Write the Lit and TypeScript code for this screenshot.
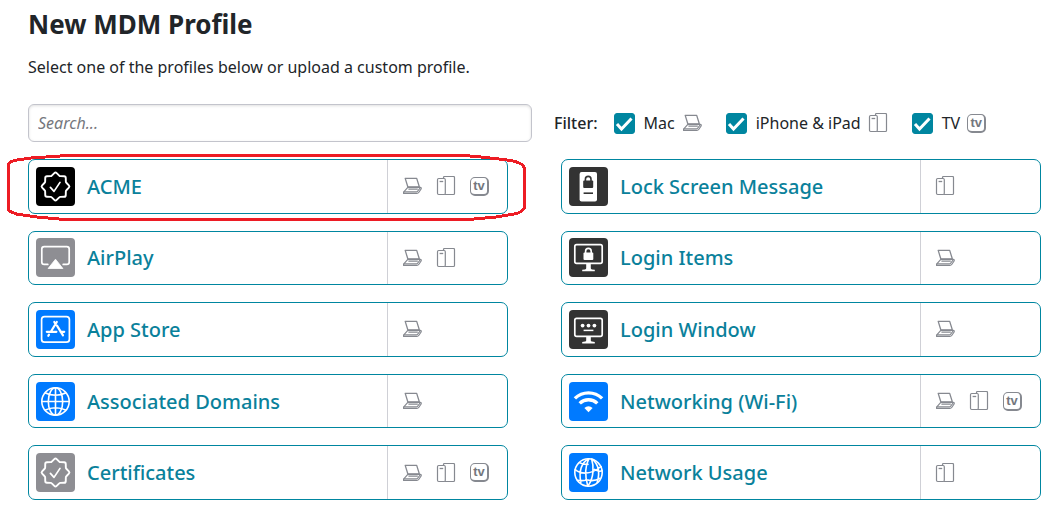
import { LitElement, html, svg, css, nothing } from "lit";
import { customElement, property } from "lit/decorators.js";

type Device = "mac" | "mobile" | "tv";
type Glyph = "seal" | "airplay" | "appstore" | "globe" | "phonelock" | "screenlock" | "screenlogin" | "wifi" | "network";

interface Profile {
  name: string;
  glyph: Glyph;
  color: string;
  devices: Device[];
  marked?: boolean;
}

const BLUE = "#007aff";
const GRAY = "#8e8e93";
const DARK = "#333333";

const PROFILES: Profile[] = [
  { name: "ACME", glyph: "seal", color: "#000000", devices: ["mac", "mobile", "tv"], marked: true },
  { name: "AirPlay", glyph: "airplay", color: GRAY, devices: ["mac", "mobile"] },
  { name: "App Store", glyph: "appstore", color: BLUE, devices: ["mac"] },
  { name: "Associated Domains", glyph: "globe", color: BLUE, devices: ["mac"] },
  { name: "Certificates", glyph: "seal", color: GRAY, devices: ["mac", "mobile", "tv"] },
  { name: "Lock Screen Message", glyph: "phonelock", color: DARK, devices: ["mobile"] },
  { name: "Login Items", glyph: "screenlock", color: DARK, devices: ["mac"] },
  { name: "Login Window", glyph: "screenlogin", color: DARK, devices: ["mac"] },
  { name: "Networking (Wi-Fi)", glyph: "wifi", color: BLUE, devices: ["mac", "mobile", "tv"] },
  { name: "Network Usage", glyph: "network", color: BLUE, devices: ["mobile"] },
];

/* Eight-pointed badge outline centred in the 39-unit tile. */
const sealPath = (() => {
  const parts: string[] = [];
  const at = (r: number, deg: number) => {
    const a = (deg * Math.PI) / 180;
    return `${(19.5 + r * Math.sin(a)).toFixed(2)} ${(19.5 - r * Math.cos(a)).toFixed(2)}`;
  };
  for (let i = 0; i < 8; i++) {
    const d = i * 45;
    parts.push(`${i ? "L" : "M"}${at(13.4, d - 5)}Q${at(14.5, d)} ${at(13.4, d + 5)}L${at(11.5, d + 19)}Q${at(11.1, d + 22.5)} ${at(11.5, d + 26)}`);
  }
  return parts.join("") + "Z";
})();

const GLYPHS = {
  seal: svg`
    <path d=${sealPath} fill="none" stroke="#fff" stroke-width="1.9" stroke-linejoin="round"/>
    <path d="M14.4 20.4l3.6 4 6-9" fill="none" stroke="#fff" stroke-width="1.7" stroke-linecap="round" stroke-linejoin="round"/>`,
  airplay: svg`
    <path d="M11.8 26.4H8.2q-2.400 0-2.400-2.400V11q0-2.400 2.400-2.400h22.600q2.400 0 2.400 2.400v13q0 2.400-2.400 2.400h-3.600" fill="none" stroke="#fff" stroke-width="1.700" stroke-linecap="round"/>
    <path d="M19.500 21.200l7.400 9.300H12.100z" fill="#fff" stroke="#fff" stroke-width=".8" stroke-linejoin="round"/>`,
  appstore: svg`
    <rect x="5.6" y="6.600" width="27.800" height="25.600" rx="3" fill="none" stroke="#fff" stroke-width="1.700"/>
    <path d="M20.800 12L14.800 21.800M18.300 12l1.300 2.200M21 15.600l6 9.800M10.800 21.800h9.600M24.500 21.800h3.700M13 24.600l-.7 1.200" fill="none" stroke="#fff" stroke-width="2.200" stroke-linecap="round"/>`,
  globe: svg`
    <g fill="none" stroke="#fff" stroke-width="1.600">
      <circle cx="19.500" cy="19.500" r="13.700"/>
      <ellipse cx="19.500" cy="19.500" rx="7.200" ry="13.700"/>
      <path d="M19.500 5.800v27.400M5.800 19.500h27.400M8.700 10.800q10.800 5 21.600 0M8.700 28.200q10.800-5 21.600 0"/>
    </g>`,
  phonelock: svg`
    <rect x="10.600" y="5" width="17.400" height="29.400" rx="2" fill="#fff"/>
    <rect x="14.200" y="13.400" width="10" height="7.600" rx="1" fill="#333"/>
    <path d="M16.400 14v-1.800a2.800 2.800 0 0 1 5.600 0V14" fill="none" stroke="#333" stroke-width="1.600"/>
    <path d="M14.600 26.200h9.400" stroke="#333" stroke-width="1.600"/>`,
  screenlock: svg`
    <rect x="5.800" y="6.600" width="27.400" height="18.800" rx="1.800" fill="none" stroke="#fff" stroke-width="1.700"/>
    <path d="M17.200 26h4.600v4.200q0 1 1.200 1.200l2.800.3v1.500H13.200v-1.500l2.800-.3q1.200-.2 1.200-1.200z" fill="#fff"/>
    <rect x="14.500" y="14.500" width="9.800" height="7.500" rx="1" fill="#fff"/>
    <path d="M16.600 15v-1.800a2.800 2.800 0 0 1 5.600 0V15" fill="none" stroke="#fff" stroke-width="1.600"/>`,
  screenlogin: svg`
    <rect x="5.800" y="8.400" width="27.400" height="18" rx="1.800" fill="none" stroke="#fff" stroke-width="1.700"/>
    <path d="M17.200 26.800h4.600v3.600q0 1 1.200 1.200l2.800.3v1.500H13.200v-1.500l2.800-.3q1.200-.2 1.200-1.200z" fill="#fff"/>
    <circle cx="13.600" cy="15.600" r="1.900" fill="#fff"/><circle cx="19.500" cy="15.600" r="1.900" fill="#fff"/><circle cx="25.400" cy="15.600" r="1.900" fill="#fff"/>
    <path d="M14.600 20.400h9.800" stroke="#fff" stroke-width="1.500"/>`,
  wifi: svg`
    <g fill="none" stroke="#fff" stroke-width="3.400">
      <path d="M5.900 16.400a19.500 19.500 0 0 1 27.200 0"/>
      <path d="M10.700 21.400a12.600 12.600 0 0 1 17.600 0"/>
    </g>
    <path d="M15.400 26a5.900 5.900 0 0 1 8.200 0l-4.100 4.200z" fill="#fff"/>`,
  network: svg`
    <g fill="none" stroke="#fff" stroke-width="1.600" stroke-linecap="round">
      <circle cx="19.500" cy="19.500" r="13.700"/>
      <path d="M19.800 5.800C12 10 9.500 17 11.800 29.500M19.800 5.800C16 13 15.800 22 18.600 32.500M22.600 6C25 13 25 25 18.900 33M23.600 6.400C30 12 31 20 28.200 29.500M6.200 16.600q4 3.500 10.200 3.500 7.500 0 15.700-6.600M8.500 27.200q4.500 1 9.200-.2M16.800 26.600q8 2.600 13.900-1.200M10.500 9.600q3 2 8.500 1.800M25.500 16.400q4.500 2.600 7.600 1.400"/>
    </g>`,
};

const deviceIcon = (device: Device) => {
  if (device === "mac") {
    return html`<svg class="device" viewBox="0 0 20 20" role="img" aria-label="Mac">
      <path d="M3.200 2.400h11.500l2.600 8.400H5.800z" fill="#fff" stroke="#868990" stroke-width="1.300" stroke-linejoin="round"/>
      <path d="M5.800 11.400h12.400q1.400.2.900 1.600l-2.400 3.500q-.6.900-1.800.9H1.600v-1.200z" fill="#fff" stroke="#868990" stroke-width="1.200" stroke-linejoin="round"/>
      <path d="M1.600 15.900h12.600q1 0 1.600-.9l2.400-3.200M6.400 13.200h9.400" fill="none" stroke="#868990" stroke-width="1.200"/>
    </svg>`;
  }
  if (device === "mobile") {
    return html`<svg class="device" viewBox="0 0 20 20" role="img" aria-label="iPhone and iPad">
      <rect x="7.500" y=".5" width="11" height="18" rx="1" fill="#fff" stroke="#868990" stroke-width="1.200"/>
      <rect x="1.500" y="2.500" width="7.800" height="16" rx="1.200" fill="#fff" stroke="#868990" stroke-width="1.200"/>
      <path d="M3.600 5.500h3.600" stroke="#868990" stroke-width="1.300"/>
    </svg>`;
  }
  return html`<span class="device tv" role="img" aria-label="TV">tv</span>`;
};

const deviceStyles = css`
  .device {
    display: block;
    flex: none;
    box-sizing: border-box;
    width: 20px;
    height: 20px;
  }
  .tv {
    width: 19px;
    height: 19px;
    border: 1px solid #868990;
    border-width: 1px 2px 2px 1px;
    border-radius: 5px;
    color: #74777e;
    font: 700 13px/15px "Liberation Sans", sans-serif;
    text-align: center;
  }
`;

@customElement("profile-card")
export class ProfileCard extends LitElement {
  @property({ attribute: false }) profile!: Profile;

  static styles = [
    deviceStyles,
    css`
      :host {
        display: block;
      }
      .card {
        position: relative;
        display: flex;
        box-sizing: border-box;
        height: 100%;
        min-height: 54px;
        border: 1px solid #0086a0;
        border-radius: 7px;
        background: #fff;
        color: #0a819b;
        text-decoration: none;
      }
      .main {
        display: flex;
        flex: 1;
        align-items: center;
        gap: 12px;
        min-width: 0;
        padding-left: 7px;
      }
      .tile {
        flex: none;
        width: 39px;
        height: 39px;
      }
      .name {
        padding-top: 1px;
        font-size: 20px;
        font-weight: 500;
        line-height: 28px;
        white-space: nowrap;
      }
      .devices {
        display: flex;
        flex: none;
        align-items: center;
        gap: 14px;
        box-sizing: border-box;
        width: 120px;
        padding-left: 14px;
        border-left: 1px solid #cfd0d6;
      }
      .mark {
        position: absolute;
        top: -6px;
        left: -22px;
        width: calc(100% + 41px);
        height: calc(100% + 14px);
        pointer-events: none;
      }
    `,
  ];

  render() {
    const p = this.profile;
    return html`<a class="card" href="#">
      <span class="main">
        <svg class="tile" viewBox="0 0 39 39" aria-hidden="true">
          <rect width="39" height="39" rx="4" fill=${p.color}></rect>
          ${GLYPHS[p.glyph]}
        </svg>
        <span class="name">${p.name}</span>
      </span>
      <span class="devices">${p.devices.map(deviceIcon)}</span>
      ${p.marked
        ? html`<svg class="mark" viewBox="0 0 519 67" preserveAspectRatio="none" aria-hidden="true">
            <path
              d="M1.500 56V10Q3 8 7 6.500L24 4 61 1.500H457L474 3 500 6Q514 8 516 12L517.500 14V54Q516 58 509 60L488 63.500 466 65.500H53L31 63.500 10 60.500Q2 58 1.500 56Z"
              fill="none" stroke="#ed1c24" stroke-width="3" stroke-linejoin="round" shape-rendering="crispEdges"></path>
          </svg>`
        : nothing}
    </a>`;
  }
}

@customElement("app-root")
export class AppRoot extends LitElement {
  static styles = [
    deviceStyles,
    css`
      :host {
        display: flex;
        flex-direction: column;
        box-sizing: border-box;
        min-height: 100vh;
        padding: 7px 14px 5px 28px;
        background: #fff;
        color: #212529;
        font: 16px/24px "Noto Sans", "Open Sans", sans-serif;
      }
      h1 {
        margin: 0;
        font-size: 26px;
        font-weight: 700;
        line-height: 34px;
      }
      .intro {
        margin: 14px 0 25px;
      }
      .toolbar {
        display: flex;
        align-items: center;
        gap: 22px;
        margin-bottom: 17px;
      }
      .search {
        flex: 1;
        box-sizing: border-box;
        min-width: 0;
        height: 38px;
        padding: 0 9px;
        border: 1px solid #c3c4cc;
        border-radius: 6px;
        background: #fff;
        box-shadow: inset 0 1px 3px rgba(0, 0, 0, 0.12);
        color: inherit;
        font: inherit;
      }
      .search::placeholder {
        color: #75777d;
        font-style: italic;
        opacity: 1;
      }
      .filters {
        display: flex;
        flex: none;
        align-items: center;
        box-sizing: border-box;
        width: 487px;
      }
      .title {
        margin-right: 16px;
        font-weight: 500;
      }
      .option {
        display: flex;
        align-items: center;
        margin-right: 24px;
      }
      .option .device {
        margin-left: 7px;
      }
      .check {
        appearance: none;
        width: 21px;
        height: 21px;
        margin: 0 9px 0 0;
        border: 1px solid #0086a0;
        border-radius: 3px;
        background: #fff;
      }
      .check:checked {
        background: #0086a0
          url("data:image/svg+xml,%3Csvg xmlns='http://www.w3.org/2000/svg' viewBox='0 0 19 19'%3E%3Cpath d='M2 10l4.500 5L16.500 4.500' fill='none' stroke='%23fff' stroke-width='3'/%3E%3C/svg%3E")
          center / 19px 19px no-repeat;
      }
      .grid {
        display: grid;
        flex: 1;
        grid-auto-flow: column;
        grid-template-rows: repeat(5, minmax(54px, 1fr));
        grid-template-columns: repeat(2, minmax(0, 1fr));
        gap: 17px 53px;
      }
    `,
  ];

  private option(text: string, device: Device) {
    return html`<label class="option">
      <input class="check" type="checkbox" checked />${text}${deviceIcon(device)}
    </label>`;
  }

  render() {
    return html`
      <h1>New MDM Profile</h1>
      <p class="intro">Select one of the profiles below or upload a custom profile.</p>
      <div class="toolbar">
        <input class="search" type="search" placeholder="Search..." aria-label="Search profiles" />
        <div class="filters" role="group" aria-labelledby="filter-title">
          <span class="title" id="filter-title">Filter:</span>
          ${this.option("Mac", "mac")} ${this.option("iPhone & iPad", "mobile")} ${this.option("TV", "tv")}
        </div>
      </div>
      <main class="grid">
        ${PROFILES.map((p) => html`<profile-card .profile=${p}></profile-card>`)}
      </main>
    `;
  }
}
